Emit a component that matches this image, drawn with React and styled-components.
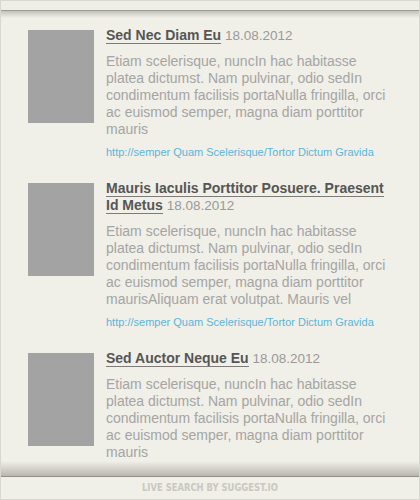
import styled, { createGlobalStyle } from "styled-components"

const GlobalStyle = createGlobalStyle`
    html, body{
        margin:0;
        padding:0;
        background:#f0efe8;
    }
    body{
        font-family: "Liberation Sans", Arial, sans-serif;
    }
`

const results = [
    {
        title: 'Sed Nec Diam Eu',
        date: '18.08.2012',
        text: 'Etiam scelerisque, nuncIn hac habitasse platea dictumst. Nam pulvinar, odio sedIn condimentum facilisis portaNulla fringilla, orci ac euismod semper, magna diam porttitor mauris',
        link: 'http://semper Quam Scelerisque/Tortor Dictum Gravida',
    },
    {
        title: 'Mauris Iaculis Porttitor Posuere. Praesent Id Metus',
        date: '18.08.2012',
        text: 'Etiam scelerisque, nuncIn hac habitasse platea dictumst. Nam pulvinar, odio sedIn condimentum facilisis portaNulla fringilla, orci ac euismod semper, magna diam porttitor maurisAliquam erat volutpat. Mauris vel',
        link: 'http://semper Quam Scelerisque/Tortor Dictum Gravida',
    },
    {
        title: 'Sed Auctor Neque Eu',
        date: '18.08.2012',
        text: 'Etiam scelerisque, nuncIn hac habitasse platea dictumst. Nam pulvinar, odio sedIn condimentum facilisis portaNulla fringilla, orci ac euismod semper, magna diam porttitor mauris',
    },
]

const App = () => {
    return(
        <Frame>
            <GlobalStyle />
            <TopBar />
            <Results>
                {results.map((item, i) => (
                    <Item key={i}>
                        <Thumb />
                        <Content>
                            <Title>
                                <a href="#">{item.title}</a> <span>{item.date}</span>
                            </Title>
                            <Text>{item.text}</Text>
                            {item.link && <Link href="#">{item.link}</Link>}
                        </Content>
                    </Item>
                ))}
            </Results>
            <Footer>
                <span>Live search by suggest.io</span>
            </Footer>
        </Frame>
    )
}

export default App


const Frame = styled.div`
    box-sizing: border-box;
    width:420px;
    height:500px;
    display:flex;
    flex-direction: column;
    border:1px solid #d9d8d0;
    background:#f0efe8;
    overflow:hidden;
`

const TopBar = styled.div`
    height:9px;
    flex-shrink:0;
    background:#efeee8;
    border-bottom:1px solid #9c9b95;
`

const Results = styled.div`
    flex:1;
    min-height:0;
    overflow:hidden;
    padding:16px 0 0 27px;
    background:
        linear-gradient(to bottom, rgba(80,78,70,.28), rgba(80,78,70,0) 7px),
        linear-gradient(to top, rgba(80,78,70,.35), rgba(80,78,70,0) 15px),
        #f0efe8;
`

const Item = styled.div`
    display:flex;
    align-items:flex-start;
    gap:12px;
    margin-bottom:21px;
`

const Thumb = styled.div`
    flex-shrink:0;
    width:66px;
    height:93px;
    margin-top:3px;
    background:#a3a3a3;
`

const Content = styled.div`
    width:285px;
`

const Title = styled.h3`
    margin:0;
    font-size:14px;
    line-height:17px;
    font-weight:400;
    color:#9a9a98;

    a{
        font-weight:700;
        color:#565654;
        text-decoration:none;
        border-bottom:1px solid #7d7c78;
    }
    span{
        font-size:13.5px;
    }
`

const Text = styled.p`
    margin:9px 0 0;
    font-size:14px;
    line-height:17px;
    color:#a5a5a3;
`

const Link = styled.a`
    display:block;
    margin-top:8px;
    font-size:11px;
    line-height:13px;
    color:#5cb5d8;
    text-decoration:none;
`

const Footer = styled.div`
    flex-shrink:0;
    height:22px;
    border-top:1px solid #8e8d87;
    text-align:center;
    font-family: "Liberation Sans Narrow", "DejaVu Sans Condensed", "Liberation Sans", sans-serif;
    font-stretch: condensed;
    font-weight:700;
    font-size:11px;
    line-height:22px;
    text-transform: uppercase;
    color:#c9c8c1;

    span{
        display:inline-block;
        transform: scaleX(.85);
    }
`
